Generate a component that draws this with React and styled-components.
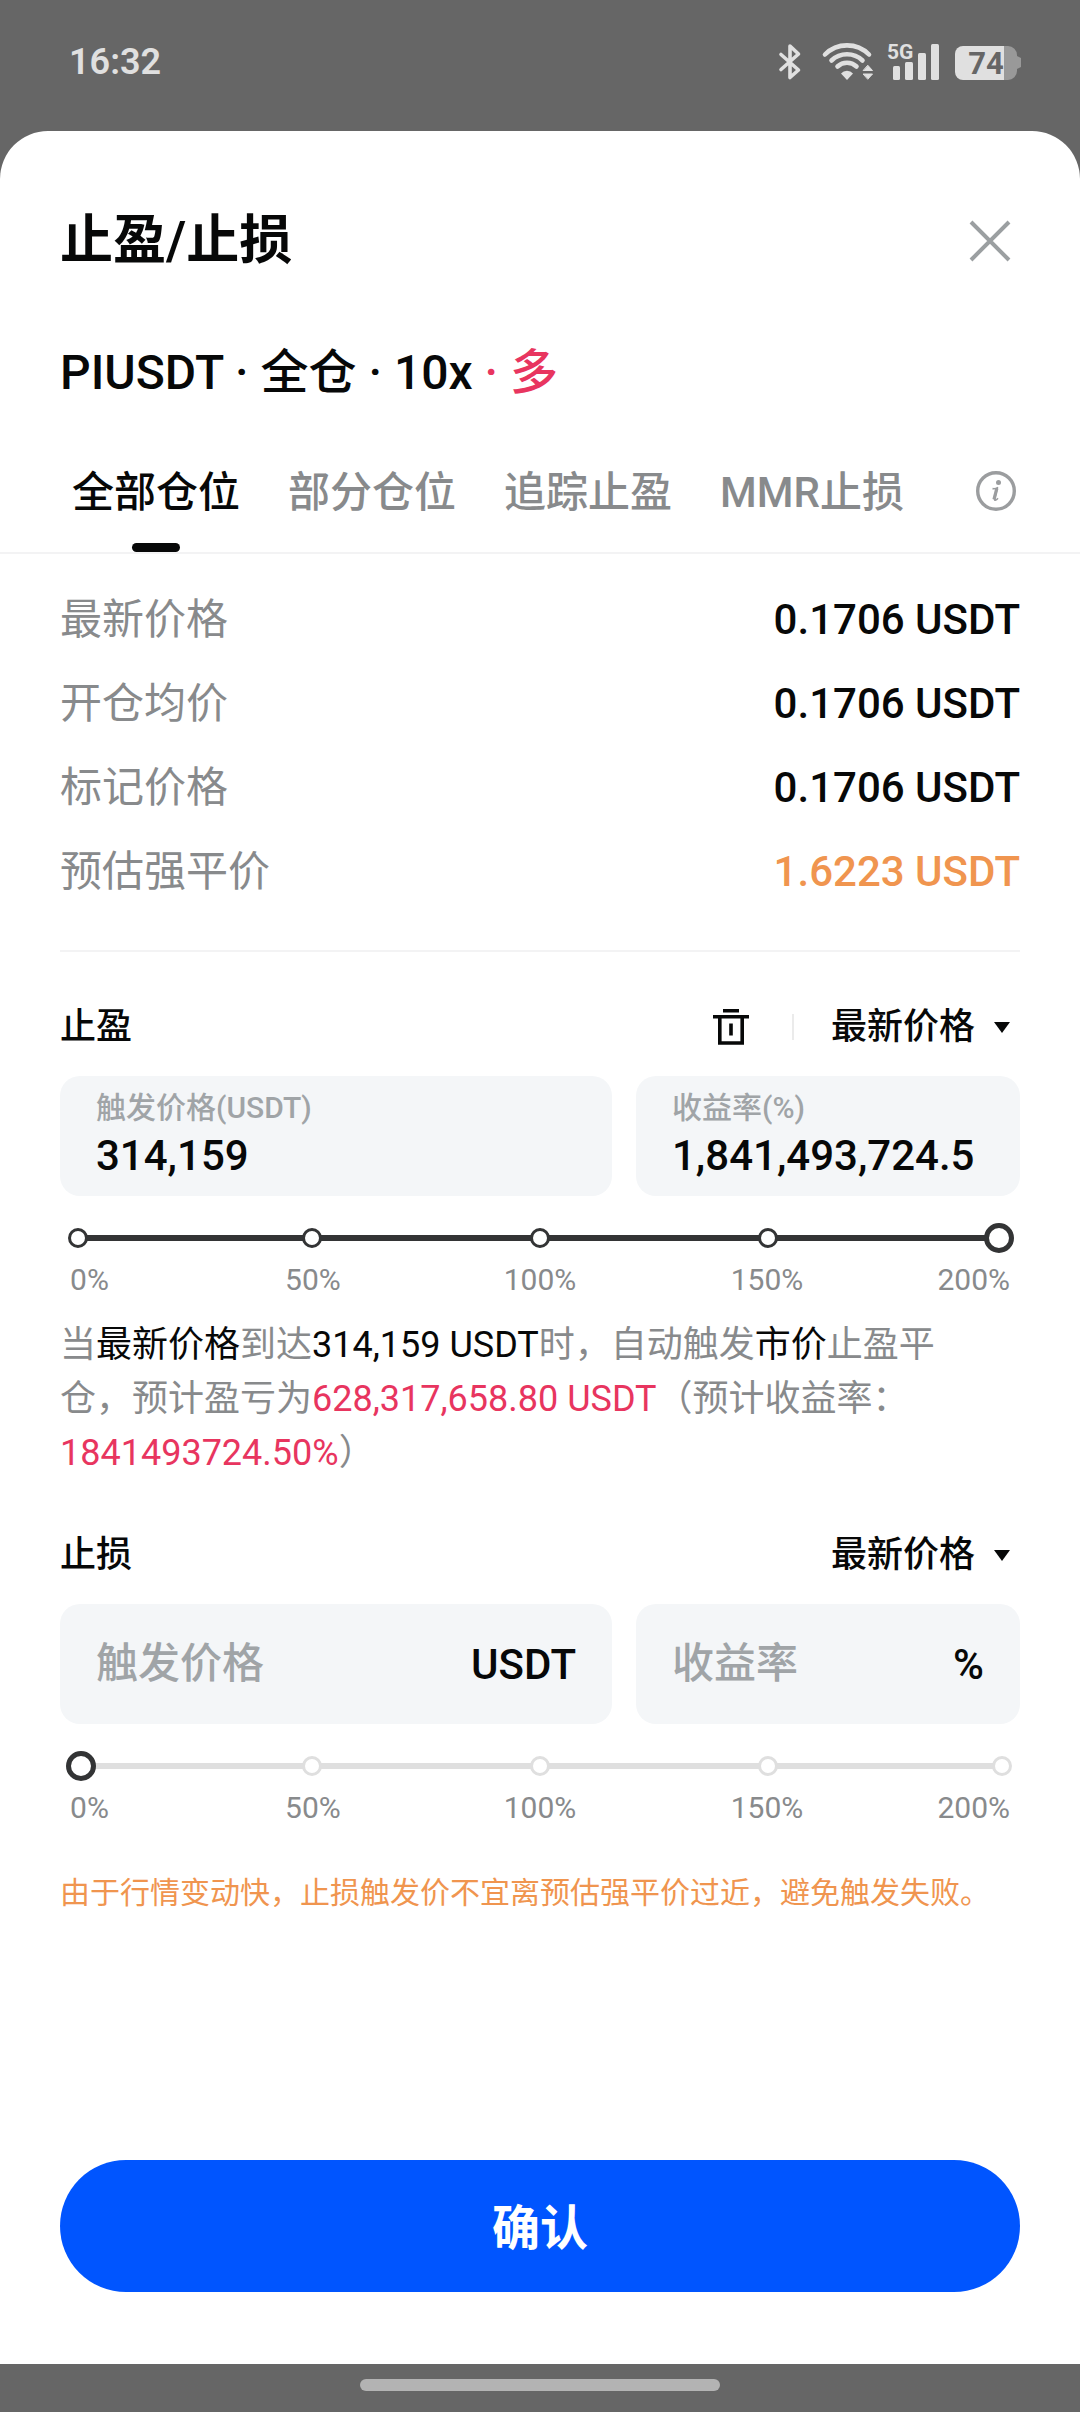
import React, { useState } from "react";
import styled, { createGlobalStyle, css } from "styled-components";

const color = {
  scrim: "#666666",
  status: "#e0e0e0",
  text: "#070808",
  muted: "#888a8c",
  faint: "#a0a4a7",
  line: "#f3f3f4",
  field: "#f4f6f8",
  primary: "#0055ff",
  pink: "#e8355f",
  orange: "#f0954f",
  track: "#dfdfdf",
  trackOn: "#333435",
};

const GlobalStyle = createGlobalStyle`
  *, *::before, *::after { box-sizing: border-box; }
  body {
    margin: 0;
    background: ${color.scrim};
    color: ${color.text};
    font-family: Roboto, "Noto Sans CJK SC", sans-serif;
    font-size: 42px;
  }
  button, input, select { font: inherit; color: inherit; }
  h1, h2, h3, p, dl, dd, dt { margin: 0; font: inherit; }
`;

const Screen = styled.div`
  display: flex;
  flex-direction: column;
  min-height: 100vh;
`;

const StatusBar = styled.header`
  display: flex;
  justify-content: space-between;
  align-items: center;
  padding: 36px 58px 43px 69px;
  color: ${color.status};
`;

const Clock = styled.time`
  font-size: 36px;
  line-height: 40px;
  font-weight: 600;
`;

const StatusIcons = styled.div`
  display: flex;
  align-items: center;
  gap: 14px;

  svg { display: block; overflow: visible; }
`;

const Sheet = styled.main`
  flex: 1;
  display: flex;
  flex-direction: column;
  padding-top: 74px;
  border-radius: 48px 48px 0 0;
  background: #fff;
`;

const SheetHeader = styled.div`
  display: flex;
  justify-content: space-between;
  align-items: center;
  padding: 0 60px;
`;

const Title = styled.h1`
  font-size: 53px;
  line-height: 72px;
  font-weight: 600;
`;

const IconButton = styled.button`
  display: flex;
  padding: 0;
  border: 0;
  background: none;
  color: ${(p) => p.$tone || color.text};
  cursor: pointer;
`;

const CloseButton = styled(IconButton)`
  padding: 8px;
`;

const Contract = styled.h2`
  padding: 60px 60px 0;
  font-size: 48px;
  line-height: 72px;
  font-weight: 500;
`;

const Side = styled.span`
  color: ${color.pink};
`;

const TabBar = styled.nav`
  display: flex;
  align-items: flex-start;
  justify-content: space-between;
  margin-top: 48px;
  padding: 0 64px 0 72px;
  border-bottom: 2px solid ${color.line};
`;

const TabList = styled.div`
  display: flex;
  gap: 48px;
`;

const Tab = styled.button`
  display: flex;
  flex-direction: column;
  align-items: center;
  gap: 14px;
  padding: 0;
  border: 0;
  background: none;
  font-size: 42px;
  line-height: 72px;
  font-weight: 500;
  white-space: nowrap;
  color: ${(p) => (p.$active ? color.text : color.muted)};
  cursor: pointer;

  &::after {
    content: "";
    width: 48px;
    height: 9px;
    border-radius: 5px;
    background: ${(p) => (p.$active ? color.text : "transparent")};
  }
`;

const InfoButton = styled(IconButton)`
  padding: 14px 0;
`;

const PriceList = styled.dl`
  margin: 0 60px;
  padding: 24px 0 36px;
  border-bottom: 2px solid ${color.line};
`;

const PriceRow = styled.div`
  display: flex;
  justify-content: space-between;
  line-height: 84px;
`;

const PriceName = styled.dt`
  color: ${color.muted};
`;

const PriceValue = styled.dd`
  font-weight: 500;
  color: ${(p) => (p.$warn ? color.orange : color.text)};
`;

const Section = styled.section`
  display: flex;
  flex-direction: column;
  padding: 48px 60px 0;
`;

const SectionHead = styled.div`
  display: flex;
  align-items: center;
  height: 54px;
  margin-bottom: 22px;
`;

const SectionTitle = styled.h3`
  flex: 1;
  font-size: 36px;
  line-height: 54px;
  font-weight: 500;
`;

const Separator = styled.span`
  width: 2px;
  height: 26px;
  margin: 0 37px 0 42px;
  background: #ebebeb;
`;

const SelectWrap = styled.label`
  display: flex;
  align-items: center;
  gap: 18px;
  padding-right: 10px;
`;

const Select = styled.select`
  appearance: none;
  padding: 0;
  border: 0;
  background: none;
  font-size: 36px;
  line-height: 54px;
  font-weight: 500;
  cursor: pointer;
`;

const Fields = styled.div`
  display: grid;
  grid-template-columns: minmax(0, 23fr) minmax(0, 16fr);
  gap: 24px;
`;

const Field = styled.label`
  min-width: 0;
  min-height: 120px;
  display: flex;
  border-radius: 20px;
  background: ${color.field};
  ${(p) =>
    p.$filled
      ? css`
          flex-direction: column;
          gap: 4px;
          padding: 12px 36px 16px;
        `
      : css`
          align-items: center;
          padding: 12px 36px;
        `}
`;

const FieldName = styled.span`
  font-size: 30px;
  line-height: 40px;
  font-weight: 500;
  color: ${color.faint};
`;

const FieldInput = styled.input`
  flex: 1;
  width: 100%;
  min-width: 0;
  height: 48px;
  padding: 0;
  border: 0;
  outline: 0;
  background: none;
  font-size: 42px;
  line-height: 48px;
  font-weight: 500;

  &::placeholder { color: ${color.faint}; opacity: 1; }
`;

const Unit = styled.span`
  font-weight: 500;
`;

const SliderBox = styled.div`
  display: grid;
  align-items: center;
  margin-top: 27px;
  padding: 0 6px;

  > * { grid-area: 1 / 1; }
`;

const sliderColumns = css`
  display: grid;
  grid-template-columns: 130fr 228fr 228fr 228fr 130fr;
  justify-items: center;

  > :first-child { justify-self: start; }
  > :last-child { justify-self: end; }
`;

const Stops = styled.div`
  ${sliderColumns}
  margin: 0 2px;
  background: linear-gradient(${(p) => (p.$on ? color.trackOn : color.track)} 0 0) center / calc(100% - 20px) 6px no-repeat;
`;

const Stop = styled.span`
  width: 20px;
  height: 20px;
  border: 3px solid ${(p) => (p.$on ? color.trackOn : color.track)};
  border-radius: 50%;
  background: #fff;
`;

const thumb = css`
  appearance: none;
  width: 30px;
  height: 30px;
  border: 5px solid ${color.trackOn};
  border-radius: 50%;
  background: #fff;
`;

const Range = styled.input`
  appearance: none;
  width: 100%;
  height: 30px;
  margin: 0;
  background: transparent;
  cursor: pointer;

  &::-webkit-slider-thumb { ${thumb} }
  &::-moz-range-thumb { ${thumb} }
`;

const StopLabels = styled.div`
  ${sliderColumns}
  padding: 0 10px;
  margin-top: 9px;
  font-size: 30px;
  line-height: 36px;
  color: ${color.muted};
`;

const Summary = styled.p`
  padding: 20px 36px 0 0;
  font-size: 36px;
  line-height: 54px;
  color: ${color.muted};
`;

const Strong = styled.span`
  color: ${color.text};
`;

const Gain = styled.span`
  color: ${color.pink};
`;

const Warning = styled.p`
  padding: 46px 60px 0;
  font-size: 30px;
  line-height: 42px;
  color: ${color.orange};
`;

const Footer = styled.div`
  display: flex;
  margin-top: auto;
  padding: 48px 60px 72px;
`;

const Confirm = styled.button`
  flex: 1;
  height: 132px;
  padding: 0 0 4px;
  border: 0;
  border-radius: 66px;
  background: ${color.primary};
  color: #fff;
  font-size: 48px;
  font-weight: 600;
  cursor: pointer;
`;

const GestureBar = styled.div`
  display: flex;
  justify-content: center;
  padding: 15px 0 21px;

  &::after {
    content: "";
    width: 34%;
    min-width: 120px;
    max-width: 360px;
    height: 12px;
    border-radius: 6px;
    background: #b3b3b3;
  }
`;

const BluetoothIcon = () => (
  <svg width="24" height="40" viewBox="0 0 24 40" fill="none" stroke="currentColor" strokeWidth="3.600" strokeLinecap="round" strokeLinejoin="round">
    <path d="M1 12.500 18.500 28 10 35.500V4L18.500 12 1 27.500" />
  </svg>
);

const WifiIcon = () => (
  <svg width="54" height="40" viewBox="0 0 54 40" fill="none" stroke="currentColor" strokeWidth="4.600" strokeLinecap="round">
    <path d="M7 12.500A31 31 0 0 1 51 12.500" />
    <path d="M13.500 18.500A22.500 22.500 0 0 1 44.500 18.500" />
    <path d="M19.500 24.500A14 14 0 0 1 38.500 24.500" />
    <path d="M23 31.500a8 8 0 0 1 12 0l-6 6.500z" fill="currentColor" stroke="none" />
    <path d="M50 23.500l4.500 5h-9zM50 37l4.500-5h-9z" fill="currentColor" strokeWidth="1" strokeLinejoin="round" />
  </svg>
);

const SignalIcon = () => (
  <svg width="54" height="52" viewBox="0 -6 54 52" fill="currentColor">
    <text x="1" y="17" fontSize="21" fontWeight="700" fontFamily="Roboto, sans-serif">5G</text>
    <rect x="7" y="24" width="7" height="14" rx="1.500" />
    <rect x="19" y="20" width="8" height="18" rx="1.500" />
    <rect x="32" y="11" width="8" height="27" rx="1.500" />
    <rect x="45" y="2" width="8" height="36" rx="1.500" />
  </svg>
);

const BatteryIcon = () => (
  <svg width="68" height="40" viewBox="0 0 68 40">
    <path d="M50 4h4a9 9 0 0 1 9 9v1l4 2v9l-4 2v2a9 9 0 0 1-9 9h-4z" fill="#999" />
    <path d="M50 4H9a8 8 0 0 0-8 8v18a8 8 0 0 0 8 8h41z" fill="currentColor" />
    <text x="32" y="32" textAnchor="middle" fontSize="31" fontWeight="700" fontFamily="Roboto, sans-serif" fill="#666">74</text>
  </svg>
);

const CloseIcon = () => (
  <svg width="44" height="44" viewBox="0 0 44 44" fill="none" stroke="currentColor" strokeWidth="4">
    <path d="M3 3l38 38M41 3L3 41" />
  </svg>
);

const InfoIcon = () => (
  <svg width="40" height="40" viewBox="0 0 40 40" fill="none" stroke="currentColor">
    <circle cx="20" cy="20" r="18.300" strokeWidth="3.400" />
    <circle cx="22.500" cy="11.500" r="2.500" fill="currentColor" stroke="none" />
    <path d="M16.500 17.600c2 .4 3.600 0 5-.9L18.600 28c-.4 1.700 1.400 1.500 3.400-.8" strokeWidth="1.600" strokeLinejoin="round" />
    <path d="M20.800 17.500 18 28.500" strokeWidth="3.200" />
  </svg>
);

const TrashIcon = () => (
  <svg width="38" height="38" viewBox="0 0 38 38" fill="none" stroke="currentColor" strokeWidth="3.600">
    <path d="M11 2.800h16M1 8.800h36M7.800 9v26h22.400V9M19 15.500V27.500" />
  </svg>
);

const CaretIcon = () => (
  <svg width="16" height="11" viewBox="0 0 16 11" fill="currentColor">
    <path d="M0 0h16L8 11z" />
  </svg>
);

const tabs = ["全部仓位", "部分仓位", "追踪止盈", "MMR止损"];
const prices = [
  { name: "最新价格", value: "0.1706 USDT" },
  { name: "开仓均价", value: "0.1706 USDT" },
  { name: "标记价格", value: "0.1706 USDT" },
  { name: "预估强平价", value: "1.6223 USDT", warn: true },
];
const stops = [0, 50, 100, 150, 200];

function PriceSelect({ label }) {
  return (
    <SelectWrap>
      <Select aria-label={label} defaultValue="last">
        <option value="last">最新价格</option>
        <option value="mark">标记价格</option>
      </Select>
      <CaretIcon />
    </SelectWrap>
  );
}

function PercentSlider({ label, initial }) {
  const [value, setValue] = useState(initial);
  return (
    <>
      <SliderBox>
        <Stops $on={value > 0}>
          {stops.map((s) => (
            <Stop key={s} $on={value > 0 && s <= value} />
          ))}
        </Stops>
        <Range
          type="range"
          min="0"
          max="200"
          aria-label={label}
          value={value}
          onChange={(e) => setValue(Number(e.target.value))}
        />
      </SliderBox>
      <StopLabels>
        {stops.map((s) => (
          <span key={s}>{s}%</span>
        ))}
      </StopLabels>
    </>
  );
}

export default function App() {
  const [active, setActive] = useState(0);
  return (
    <>
      <GlobalStyle />
      <Screen>
        <StatusBar>
          <Clock>16:32</Clock>
          <StatusIcons>
            <BluetoothIcon />
            <WifiIcon />
            <SignalIcon />
            <BatteryIcon />
          </StatusIcons>
        </StatusBar>

        <Sheet>
          <SheetHeader>
            <Title>止盈/止损</Title>
            <CloseButton type="button" aria-label="关闭" $tone="#9b9fa1">
              <CloseIcon />
            </CloseButton>
          </SheetHeader>

          <Contract>
            PIUSDT · 全仓 · 10x <Side>· 多</Side>
          </Contract>

          <TabBar>
            <TabList>
              {tabs.map((t, i) => (
                <Tab key={t} type="button" $active={i === active} onClick={() => setActive(i)}>
                  {t}
                </Tab>
              ))}
            </TabList>
            <InfoButton type="button" aria-label="说明" $tone="#9b9d9f">
              <InfoIcon />
            </InfoButton>
          </TabBar>

          <PriceList>
            {prices.map((p) => (
              <PriceRow key={p.name}>
                <PriceName>{p.name}</PriceName>
                <PriceValue $warn={p.warn}>{p.value}</PriceValue>
              </PriceRow>
            ))}
          </PriceList>

          <Section>
            <SectionHead>
              <SectionTitle>止盈</SectionTitle>
              <IconButton type="button" aria-label="删除">
                <TrashIcon />
              </IconButton>
              <Separator />
              <PriceSelect label="止盈触发类型" />
            </SectionHead>
            <Fields>
              <Field $filled>
                <FieldName>触发价格(USDT)</FieldName>
                <FieldInput type="text" inputMode="decimal" defaultValue="314,159" />
              </Field>
              <Field $filled>
                <FieldName>收益率(%)</FieldName>
                <FieldInput type="text" inputMode="decimal" defaultValue="1,841,493,724.5" />
              </Field>
            </Fields>
            <PercentSlider label="止盈收益率" initial={200} />
            <Summary>
              当<Strong>最新价格</Strong>到达<Strong>314,159 USDT</Strong>时，自动触发<Strong>市价</Strong>止盈平仓，预计盈亏为
              <Gain>628,317,658.80 USDT</Gain>（预计收益率：<Gain>1841493724.50%</Gain>）
            </Summary>
          </Section>

          <Section>
            <SectionHead>
              <SectionTitle>止损</SectionTitle>
              <PriceSelect label="止损触发类型" />
            </SectionHead>
            <Fields>
              <Field>
                <FieldInput type="text" inputMode="decimal" placeholder="触发价格" aria-label="触发价格" />
                <Unit>USDT</Unit>
              </Field>
              <Field>
                <FieldInput type="text" inputMode="decimal" placeholder="收益率" aria-label="收益率" />
                <Unit>%</Unit>
              </Field>
            </Fields>
            <PercentSlider label="止损收益率" initial={0} />
          </Section>

          <Warning>由于行情变动快，止损触发价不宜离预估强平价过近，避免触发失败。</Warning>

          <Footer>
            <Confirm type="button">确认</Confirm>
          </Footer>
        </Sheet>
        <GestureBar />
      </Screen>
    </>
  );
}
